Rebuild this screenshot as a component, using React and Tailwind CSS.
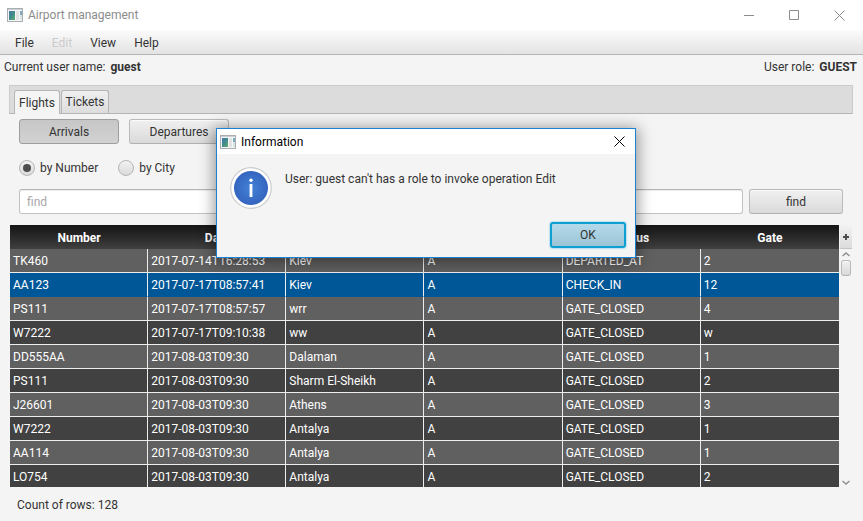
import React from "react";

const columns = ["Number", "Date", "City", "Terminal", "Status", "Gate"];

const flights = [
  ["TK460", "2017-07-14T16:28:53", "Kiev", "A", "DEPARTED_AT", "2"],
  ["AA123", "2017-07-17T08:57:41", "Kiev", "A", "CHECK_IN", "12"],
  ["PS111", "2017-07-17T08:57:57", "wrr", "A", "GATE_CLOSED", "4"],
  ["W7222", "2017-07-17T09:10:38", "ww", "A", "GATE_CLOSED", "w"],
  ["DD555AA", "2017-08-03T09:30", "Dalaman", "A", "GATE_CLOSED", "1"],
  ["PS111", "2017-08-03T09:30", "Sharm El-Sheikh", "A", "GATE_CLOSED", "2"],
  ["J26601", "2017-08-03T09:30", "Athens", "A", "GATE_CLOSED", "3"],
  ["W7222", "2017-08-03T09:30", "Antalya", "A", "GATE_CLOSED", "1"],
  ["AA114", "2017-08-03T09:30", "Antalya", "A", "GATE_CLOSED", "1"],
  ["LO754", "2017-08-03T09:30", "Antalya", "A", "GATE_CLOSED", "2"],
];

const SELECTED = 1;

const raised =
  "rounded-[3px] border border-[#bababa] border-b-[#b0b0b0] bg-linear-to-b from-[#f0f0f0] to-[#dadada] shadow-[inset_0_1px_0_#fbfbfb]";

function AppIcon() {
  return (
    <svg width="16" height="14" viewBox="0 0 16 14" aria-hidden="true" className="shrink-0">
      <defs>
        <linearGradient id="pane" x1="0" y1="0" x2="1" y2="1">
          <stop offset="0" stopColor="#4b77a6" />
          <stop offset="0.5" stopColor="#3f8c8c" />
          <stop offset="1" stopColor="#65b06f" />
        </linearGradient>
      </defs>
      <rect x="0.5" y="0.5" width="15" height="13" fill="#f4f5f6" stroke="#a9aeb3" />
      <rect x="1" y="1" width="14" height="1" fill="#c9ced3" />
      <rect x="2" y="3" width="6" height="9" fill="url(#pane)" />
      <rect x="9" y="3" width="3" height="9" fill="#e2e2e2" />
      <rect x="13" y="3" width="2" height="4" fill="#7cabc0" />
      <rect x="13" y="7" width="2" height="5" fill="#d8e4e0" />
    </svg>
  );
}

function TitleBar() {
  return (
    <header className="flex h-[30px] items-center bg-white pl-[7px] text-[#8c8c8c]">
      <AppIcon />
      <h1 className="ml-[5px] flex-1">Airport management</h1>
      <button aria-label="Minimize" className="flex h-[28px] w-[46px] items-center justify-center">
        <svg width="10" height="10" viewBox="0 0 10 10" stroke="#8c8c8c" fill="none">
          <path d="M0 5.5H10" />
        </svg>
      </button>
      <button aria-label="Maximize" className="flex h-[28px] w-[44px] items-center justify-center">
        <svg width="10" height="10" viewBox="0 0 10 10" stroke="#8c8c8c" fill="none">
          <path d="M0.5 0.5H9.5V9.5H0.5Z" />
        </svg>
      </button>
      <button aria-label="Close" className="flex h-[28px] w-[47px] items-center justify-center">
        <svg width="11" height="11" viewBox="0 0 11 11" stroke="#8c8c8c" fill="none">
          <path d="M0.5 0.5L10.5 10.5M10.5 0.5L0.5 10.5" />
        </svg>
      </button>
    </header>
  );
}

function MenuBar() {
  return (
    <nav className="flex h-[25px] items-center gap-[18px] border-b border-[#b5b5b5] bg-linear-to-b from-[#fbfbfb] to-[#e3e3e3] pt-px pl-[15px]">
      <button>File</button>
      <button disabled className="text-[#cbcbcb]">Edit</button>
      <button>View</button>
      <button>Help</button>
    </nav>
  );
}

function FlightTable() {
  return (
    <div className="mx-[10px] mt-[11px] flex">
      <div className="min-w-0 flex-1">
        <table className="w-full table-fixed border-separate border-spacing-0 text-white">
          <thead>
            <tr className="h-[24px] bg-linear-to-b from-[#151515] to-[#404040]">
              {columns.map((name) => (
                <th key={name} className="p-0 pt-px text-center font-bold">{name}</th>
              ))}
            </tr>
          </thead>
          <tbody>
            {flights.map((row, r) => {
              const last = r === flights.length - 1;
              const tone = r === SELECTED ? "bg-[#005797]" : r % 2 === 0 ? "bg-[#606060]" : "bg-[#414141]";
              const line = last
                ? "pt-px"
                : r === SELECTED
                  ? "pt-0 border-b border-b-[#005797]"
                  : "pt-0 border-b border-b-[#ededed]";
              return (
                <tr key={r} className={`${tone} ${last ? "h-[22px]" : "h-[24px]"}`}>
                  {row.map((value, c) => (
                    <td
                      key={c}
                      className={`truncate pr-0 pb-0 pl-[3px] ${line} ${c < 5 ? "border-r border-r-[#ededed]" : ""}`}
                    >
                      {value}
                    </td>
                  ))}
                </tr>
              );
            })}
          </tbody>
        </table>
      </div>
      <div className="flex w-[14px] flex-col items-center">
        <button
          aria-label="Choose columns"
          className="flex h-[24px] w-[12px] items-center justify-center border-b border-[#c4c4c4] bg-linear-to-b from-[#f2f2f2] to-[#dcdcdc]"
        >
          <svg width="6" height="6" viewBox="0 0 6 6" fill="#4d4d4d">
            <path d="M2 0h2v2h2v2h-2v2h-2v-2h-2v-2h2z" />
          </svg>
        </button>
        <button aria-label="Scroll up" className="flex h-[10px] w-full items-center justify-center">
          <svg width="8" height="5" viewBox="0 0 8 5" fill="none" stroke="#8f8f8f" strokeWidth="1.4">
            <path d="M0.5 4L4 1L7.5 4" />
          </svg>
        </button>
        <div className={`mt-[1px] h-[16px] w-[10px] ${raised}`} />
        <div className="flex-1" />
        <button aria-label="Scroll down" className="flex h-[9px] w-full items-center justify-center">
          <svg width="8" height="5" viewBox="0 0 8 5" fill="none" stroke="#8f8f8f" strokeWidth="1.4">
            <path d="M0.5 1L4 4L7.5 1" />
          </svg>
        </button>
      </div>
    </div>
  );
}

function InfoDialog() {
  return (
    <section
      role="dialog"
      aria-labelledby="dialog-title"
      className="absolute top-[128px] left-[216px] w-[420px] border border-[#1b82d3] bg-[#f4f4f4] shadow-[0_2px_14px_2px_rgba(0,0,0,0.4)]"
    >
      <div className="flex h-[25px] items-center bg-white pl-[3px] text-black">
        <AppIcon />
        <h2 id="dialog-title" className="ml-[5px] flex-1">Information</h2>
        <button aria-label="Close dialog" className="flex h-[25px] w-[31px] items-center justify-center">
          <svg width="11" height="11" viewBox="0 0 11 11" stroke="#000000" fill="none">
            <path d="M0.5 0.5L10.5 10.5M10.5 0.5L0.5 10.5" />
          </svg>
        </button>
      </div>
      <div className="flex gap-[13px] pt-[13px] pl-[13px]">
        <svg width="42" height="42" viewBox="0 0 42 42" aria-hidden="true" className="shrink-0">
          <defs>
            <radialGradient id="info">
              <stop offset="0" stopColor="#4482d6" />
              <stop offset="1" stopColor="#3565bf" />
            </radialGradient>
          </defs>
          <circle cx="21" cy="21" r="20.3" fill="#ffffff" stroke="#cccccc" strokeWidth="1.2" />
          <circle cx="21" cy="21" r="17" fill="url(#info)" />
          <circle cx="21" cy="13.3" r="1.7" fill="#ffffff" />
          <rect x="19.6" y="17" width="2.8" height="13" fill="#ffffff" />
        </svg>
        <p className="pt-[4px]">User: guest can't has a role to invoke operation Edit</p>
      </div>
      <div className="flex justify-end pt-[13px] pr-[9px] pb-[9px]">
        <button className="h-[26px] w-[76px] rounded-[3px] border-2 border-[#0f9fd2] bg-linear-to-b from-[#b4daea] to-[#9cc4d6] shadow-[0_0_1px_1px_#b9e2f1]">
          OK
        </button>
      </div>
    </section>
  );
}

export default function App() {
  const radio =
    "flex size-4 appearance-none items-center justify-center rounded-full border border-[#b5b5b5] bg-linear-to-b from-[#f2f2f2] to-[#dadada] checked:before:size-2 checked:before:rounded-full checked:before:bg-[#4d4d4d] checked:before:content-['']";
  return (
    <div className="relative min-h-screen overflow-hidden bg-[#f4f4f4] font-['Roboto','Open_Sans',sans-serif] text-[12px] leading-[16px] text-[#333333]">
      <TitleBar />
      <MenuBar />
      <div className="flex h-[24px] items-center justify-between pr-[6px] pl-[4px]">
        <p>Current user name: <b className="ml-[2px]">guest</b></p>
        <p>User role: <b className="ml-[2px]">GUEST</b></p>
      </div>
      <div
        role="tablist"
        className="mt-[6px] mr-[10px] ml-[9px] flex h-[29px] items-end gap-[1px] border border-[#cbcbcb] border-b-[#b5b5b5] bg-[#dcdcdc] pl-[4px]"
      >
        <button
          role="tab"
          aria-selected="true"
          className="-mb-px h-[24px] w-[46px] rounded-t-[3px] border border-b-0 border-[#b5b5b5] bg-[#f4f4f4]"
        >
          Flights
        </button>
        <button
          role="tab"
          aria-selected="false"
          className="h-[23px] w-[48px] rounded-t-[3px] border border-b-0 border-[#b5b5b5] bg-linear-to-b from-[#efefef] to-[#dddddd]"
        >
          Tickets
        </button>
      </div>
      <main>
        <div className="flex gap-[10px] pt-[5px] pl-[19px]">
          <button
            aria-pressed="true"
            className="h-[25px] w-[100px] rounded-[3px] border border-[#9e9e9e] bg-linear-to-b from-[#c6c6c6] to-[#d2d2d2]"
          >
            Arrivals
          </button>
          <button className={`h-[25px] w-[100px] ${raised}`}>Departures</button>
        </div>
        <div className="flex gap-[20px] pt-[16px] pl-[19px]">
          <label className="flex items-center gap-[5px]">
            <input type="radio" name="mode" defaultChecked className={radio} />
            by Number
          </label>
          <label className="flex items-center gap-[5px]">
            <input type="radio" name="mode" className={radio} />
            by City
          </label>
        </div>
        <div className="flex gap-[6px] pt-[13px] pr-[20px] pl-[19px]">
          <input
            type="text"
            aria-label="find"
            placeholder="find"
            className="h-[25px] min-w-0 flex-1 rounded-[3px] border border-[#c2c2c2] border-t-[#b5b5b5] bg-white px-[7px] shadow-[inset_0_1px_1px_#ededed] placeholder:text-[#a8a8a8]"
          />
          <button className={`h-[25px] w-[94px] ${raised}`}>find</button>
        </div>
        <FlightTable />
      </main>
      <footer className="pt-[10px] pl-[17px]">Count of rows: 128</footer>
      <InfoDialog />
    </div>
  );
}
